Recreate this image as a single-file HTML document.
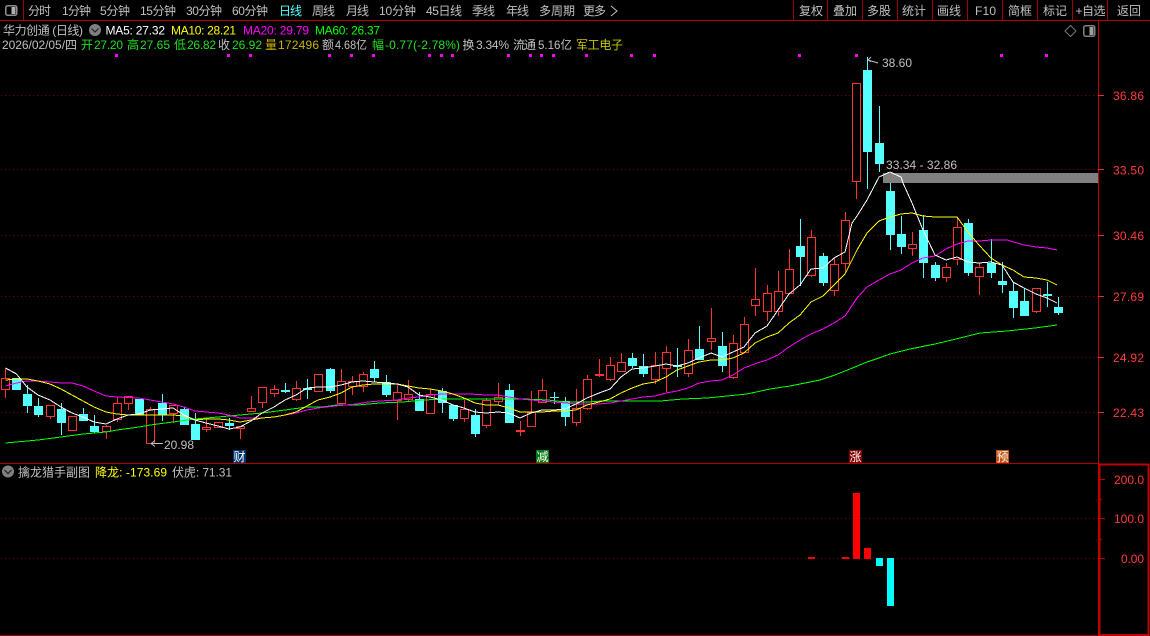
<!DOCTYPE html>
<html lang="zh">
<head>
<meta charset="utf-8">
<title>华力创通 日线</title>
<style>
html,body{margin:0;padding:0;background:#000;width:1150px;height:636px;overflow:hidden}
svg{display:block;position:absolute;left:0;top:0}
text{font-family:"Liberation Sans","Noto Sans CJK SC",sans-serif;font-size:12px;fill:#c0c0c0}
.ax{fill:#ff3c3c}
.g{fill:#20e020}
.y{fill:#ffff00}
.o{fill:#c8b400}
.w{fill:#fff}
.m{fill:#ff00ff}
.gr{fill:#00ff00}
</style>
</head>
<body>
<svg width="1150" height="636" viewBox="0 0 1150 636">
<rect width="1150" height="636" fill="#000"/>

<!-- grid -->
<g stroke="#800000" stroke-width="1" stroke-dasharray="1 3" shape-rendering="crispEdges">
<path d="M1 95.5H1098M1 169.5H1098M1 235.5H1098M1 296.5H1098M1 357.5H1098M1 412.5H1098M1 518.5H1098M1 558.5H1098"/>
</g>

<!-- candles -->
<g shape-rendering="crispEdges">
<path stroke="#55ffff" fill="none" d="M27.5 385V413M38.5 398V417M61.5 403V435M83.5 408V421M94.5 415V433M162.5 394V421M184.5 407V425M195.5 413V440M229.5 418V430M285.5 383V393M307.5 379V399M330.5 368V393M374.5 361V382M386.5 375V397M419.5 392V411M442.5 388V413M453.5 405V421M475.5 409V437M509.5 384V423M554.5 392V404M565.5 397V426M632.5 353V368M643.5 354V377M677.5 348V377M699.5 326V360M722.5 332V372M800.5 219V286M823.5 253V286M867.5 57V189M879.5 106V172M890.5 183V250M901.5 216V254M923.5 215V278M935.5 262V281M968.5 219V276M991.5 239V278M1002.5 262V293M1013.5 282V318M1024.5 288V316M1047.5 282V307M1058.5 297V315"/>
<path fill="#55ffff" d="M12 378h9v12h-9zM23 394h9v12h-9zM34 406h9v9h-9zM57 409h9v14h-9zM79 414h9v7h-9zM90 426h9v6h-9zM135 399h9v16h-9zM158 403h9v12h-9zM180 409h9v16h-9zM191 424h9v16h-9zM225 423h9v3h-9zM281 390h9v2h-9zM303 388h9v2h-9zM326 369h9v22h-9zM370 369h9v9h-9zM382 382h9v13h-9zM415 399h9v12h-9zM438 391h9v12h-9zM449 405h9v14h-9zM471 415h9v19h-9zM505 390h9v33h-9zM550 397h9v1h-9zM561 401h9v16h-9zM628 358h9v8h-9zM639 366h9v8h-9zM673 365h9v2h-9zM695 349h9v11h-9zM718 346h9v20h-9zM796 246h9v11h-9zM819 256h9v27h-9zM863 70h9v82h-9zM875 143h9v21h-9zM886 191h9v44h-9zM897 234h9v13h-9zM919 230h9v33h-9zM931 265h9v13h-9zM964 223h9v50h-9zM987 263h9v10h-9zM998 281h9v4h-9zM1009 291h9v17h-9zM1020 301h9v15h-9zM1043 294h9v2h-9zM1054 307h9v6h-9z"/>
<path stroke="#ff3232" fill="none" d="M5.5 368V398M50.5 405V419M72.5 416V431M106.5 425V439M117.5 397V422M128.5 396V410M150.5 407V443M173.5 405V423M206.5 418V432M218.5 422V428M240.5 426V439M251.5 396V412M262.5 387V408M274.5 385V397M296.5 381V401M318.5 374V391M341.5 369V404M352.5 376V395M363.5 372V392M397.5 383V420M408.5 380V402M430.5 389V413M464.5 400V422M486.5 398V428M498.5 383V405M520.5 421V436M531.5 391V426M542.5 379V402M576.5 389V426M587.5 375V410M599.5 359V377M610.5 357V381M621.5 353V371M655.5 352V384M666.5 346V392M688.5 339V377M711.5 308V350M733.5 335V379M744.5 317V352M755.5 268V316M767.5 285V321M778.5 271V316M789.5 249V294M811.5 230V277M834.5 258V296M845.5 212V273M856.5 83V199M912.5 232V256M946.5 263V282M957.5 217V265M979.5 263V295M1036.5 288V313"/>
<path stroke="#ff3232" fill="#000" d="M1.5 378.5h8v11h-8zM46.5 405.5h8v11h-8zM68.5 416.5h8v14h-8zM102.5 426.5h8v5h-8zM113.5 403.5h8v16h-8zM124.5 396.5h8v7h-8zM146.5 409.5h8v34h-8zM169.5 405.5h8v8h-8zM202.5 427.5h8v2h-8zM214.5 422.5h8v5h-8zM236.5 426.5h8v2h-8zM247.5 408.5h8v3h-8zM258.5 387.5h8v15h-8zM270.5 389.5h8v4h-8zM292.5 388.5h8v11h-8zM314.5 374.5h8v17h-8zM337.5 381.5h8v22h-8zM348.5 381.5h8v5h-8zM359.5 374.5h8v12h-8zM393.5 392.5h8v8h-8zM404.5 394.5h8v5h-8zM426.5 394.5h8v19h-8zM460.5 409.5h8v9h-8zM482.5 400.5h8v25h-8zM494.5 397.5h8v4h-8zM516.5 430.5h8v1h-8zM527.5 412.5h8v14h-8zM538.5 390.5h8v12h-8zM572.5 408.5h8v14h-8zM583.5 379.5h8v29h-8zM595.5 374.5h8v1h-8zM606.5 365.5h8v14h-8zM617.5 362.5h8v9h-8zM651.5 365.5h8v14h-8zM662.5 352.5h8v16h-8zM684.5 350.5h8v23h-8zM707.5 338.5h8v3h-8zM729.5 343.5h8v34h-8zM740.5 324.5h8v28h-8zM751.5 299.5h8v6h-8zM763.5 293.5h8v18h-8zM774.5 291.5h8v20h-8zM785.5 269.5h8v24h-8zM807.5 237.5h8v38h-8zM830.5 264.5h8v26h-8zM841.5 220.5h8v43h-8zM852.5 83.5h8v98h-8zM908.5 244.5h8v4h-8zM942.5 267.5h8v10h-8zM953.5 227.5h8v32h-8zM975.5 267.5h8v9h-8zM1032.5 288.5h8v23h-8z"/>
</g>

<!-- highlight band -->
<rect x="883" y="173" width="215" height="10" fill="#808080"/>

<!-- moving averages -->
<g fill="none" stroke-width="1" shape-rendering="crispEdges" stroke-linejoin="round">
<polyline stroke="#00ff00" points="5.5,443 38,440 61,437 83,434 106,432 117,430 139,427 150,425 173,422 195,419 218,417 240,415 262,413 285,410 307,407 323,407 337,405 358,405 380,403 403,402 423,400 448,399 477,399 503,399 523,399 548,400 565,402 587,402 603,401 637,401 660,401 683,399 707,398 727,396 747,394 770,389 790,386 820,380 835,375 850,369 867,362 879,358 890,354 910,349 935,344 956,339 980,333 1007,331 1035,328 1057,325"/>
<polyline stroke="#ff00ff" points="5.5,386 16.5,383 27,381 38,381 50,382 61,383 72,383 83,386 94,391 106,396 117,397 139,398 150,400 162,402 173,404 184,407 195,411 206,412 218,413 229,415 240,418 251,418 262,418 274,417 285,415 296,413 307,410 318,408 335,406 357,404 368,402 380,401 397,400 408,398 419,397 430,395 442,394 453,394 470,394 486,395 498,395 509,397 520,399 531,400 542,401 554,402 565,403 576,404 587,404 599,404 610,403 621,401 632,399 643,397 655,396 666,393 677,391 688,388 699,383 711,381 722,380 733,375 744,368 757,363 767,360 778,355 789,347 800,340 811,334 823,329 834,323 845,316 857,298 867,287 879,280 890,274 901,270 912,263 923,258 935,256 946,249 957,244 968,241 979,241 991,240 1007,240 1024,245 1036,247 1047,248 1057,250"/>
<polyline stroke="#ffff00" points="5.5,380 16.5,379 27,379 38,381 50,384 61,389 72,395 83,401 94,407 106,412 117,414 128,415 139,415 150,415 162,415 173,415 184,416 195,420 206,419 218,419 229,420 240,422 251,420 262,418 274,417 285,415 296,412 307,406 318,400 330,397 341,393 352,387 363,385 374,384 386,384 397,384 408,386 419,388 430,389 442,391 453,394 464,398 475,403 486,405 498,405 509,408 520,412 531,412 542,412 554,411 565,411 576,410 587,405 599,402 610,399 621,393 632,388 643,384 655,382 666,377 677,370 688,366 699,362 711,360 722,360 733,358 744,353 755,343 767,337 778,333 789,323 800,315 811,302 823,296 834,285 845,274 857,250 867,233 879,221 890,217 901,214 912,213 923,216 935,217 957,217 968,232 979,245 991,258 1002,265 1013,270 1024,277 1036,278 1047,280 1057,285"/>
<polyline stroke="#ffffff" points="5.5,368 16.5,374 27,387 38,395 50,400 61,407 72,413 83,417 94,422 106,424 117,419 128,415 139,414 150,410 162,409 173,408 184,415 195,420 206,423 218,426 229,429 240,427 251,421 262,413 274,407 285,400 296,395 307,388 318,387 330,387 341,385 352,382 363,381 374,382 386,383 397,384 408,387 419,395 430,397 442,400 453,405 464,408 475,412 486,413 498,412 509,413 520,418 531,413 542,410 554,410 565,409 576,404 587,398 599,393 610,389 621,377 632,369 643,368 655,366 666,364 677,366 688,363 699,358 711,353 722,357 733,352 744,347 755,333 767,326 778,310 789,294 800,285 811,269 823,268 834,258 845,252 852,223 857,216 867,200 879,177 890,172 901,177 903,183 912,203 923,230 935,255 946,260 957,257 968,262 979,263 991,262 1002,265 1013,282 1024,288 1036,294 1047,298 1057,303"/>
</g>

<!-- panel frame -->
<g fill="none" stroke="#b00000" shape-rendering="crispEdges">
<path d="M0 20.5H1150" stroke="#b80000"/>
<path d="M23.5 0V20M793.5 0V20M827.5 0V20M862.5 0V20M897.5 0V20M932.5 0V20M967.5 0V20M1002.5 0V20M1037.5 0V20M1072.5 0V20M1107.5 0V20" stroke="#a00000"/>
<path d="M1098.5 20V636" stroke="#c00000"/>
<path d="M0 463.5H1098" stroke="#b00000"/>
<path d="M0 635.5H1098" stroke="#900000"/>
<rect x="1099.5" y="464.5" width="49" height="170.5" stroke="#c00000" stroke-width="2"/>
</g>
<g stroke="#e03030" shape-rendering="crispEdges" fill="none">
<path d="M1098 95.5h6M1098 169.5h6M1098 235.5h6M1098 296.5h6M1098 357.5h6M1098 412.5h6"/>
<path d="M1100 479.5h5M1100 518.5h5M1100 558.5h5M1100 499.5h2M1100 539.5h2" stroke="#c00000"/>
</g>

<!-- top-left icon -->
<rect x="5.75" y="5.75" width="11" height="9.5" rx="2" fill="none" stroke="#909090" stroke-width="1.5"/>
<rect x="11.5" y="7" width="4" height="7" fill="#b0b0b0"/>

<!-- menu -->
<g>
<text x="28" y="15" textLength="23">分时</text>
<text x="62" y="15" textLength="29">1分钟</text>
<text x="100" y="15" textLength="30">5分钟</text>
<text x="140" y="15" textLength="36">15分钟</text>
<text x="186" y="15" textLength="36">30分钟</text>
<text x="232" y="15" textLength="36">60分钟</text>
<text x="279" y="15" textLength="23" style="fill:#55ffff">日线</text>
<text x="312" y="15" textLength="23">周线</text>
<text x="346" y="15" textLength="23">月线</text>
<text x="379" y="15" textLength="37">10分钟</text>
<text x="426" y="15" textLength="36">45日线</text>
<text x="472" y="15" textLength="23">季线</text>
<text x="506" y="15" textLength="23">年线</text>
<text x="539" y="15" textLength="36">多周期</text>
<text x="583" y="15" textLength="23">更多</text>
<path d="M611 6l6 5-6 5" fill="none" stroke="#c0c0c0"/>
<text x="799" y="15" textLength="24">复权</text>
<text x="833" y="15" textLength="24">叠加</text>
<text x="867" y="15" textLength="24">多股</text>
<text x="902" y="15" textLength="24">统计</text>
<text x="937" y="15" textLength="24">画线</text>
<text x="975" y="15" textLength="21">F10</text>
<text x="1008" y="15" textLength="24">简框</text>
<text x="1043" y="15" textLength="24">标记</text>
<text x="1075.5" y="15" textLength="30">+自选</text>
<text x="1117" y="15" textLength="24">返回</text>
</g>

<!-- title row -->
<text x="3" y="34.5" textLength="80">华力创通 (日线)</text>
<circle cx="95" cy="30" r="6" fill="#808080"/>
<path d="M91.5 28.5l3.5 3.5 3.5-3.5" fill="none" stroke="#222" stroke-width="1.2"/>
<text x="105.5" y="34.5" textLength="59.5" class="w">MA5: 27.32</text>
<text x="171" y="34.5" textLength="65" class="y">MA10: 28.21</text>
<text x="243" y="34.5" textLength="66" class="m">MA20: 29.79</text>
<text x="315" y="34.5" textLength="65" class="gr">MA60: 26.37</text>

<!-- quote row -->
<text x="2" y="49" textLength="75">2026/02/05/四</text>
<text x="81" y="49" class="g">开</text><text x="94" y="49" textLength="29" class="g">27.20</text>
<text x="127" y="49" class="g">高</text><text x="140" y="49" textLength="30" class="g">27.65</text>
<text x="174" y="49" class="g">低</text><text x="187" y="49" textLength="29" class="g">26.82</text>
<text x="218" y="49">收</text><text x="232" y="49" textLength="30" class="g">26.92</text>
<text x="265" y="49" class="o">量</text><text x="278" y="49" textLength="41" class="o">172496</text>
<text x="322" y="49">额</text><text x="335" y="49" textLength="32" lengthAdjust="spacingAndGlyphs">4.68亿</text>
<text x="372" y="49" class="g">幅</text><text x="385" y="49" textLength="75" class="g">-0.77(-2.78%)</text>
<text x="462.5" y="49">换</text><text x="476" y="49" textLength="33">3.34%</text>
<text x="513" y="49" textLength="23">流通</text><text x="538" y="49" textLength="34" lengthAdjust="spacingAndGlyphs">5.16亿</text>
<text x="576" y="49" textLength="47" style="fill:#c8c800">军工电子</text>

<!-- diamond + icon -->
<path d="M1070.5 25.5l5.5 5.5-5.5 5.5-5.5-5.5z" fill="none" stroke="#777"/>
<rect x="1083.75" y="25.75" width="11" height="10.5" rx="2" fill="none" stroke="#808080" stroke-width="1.5"/>
<rect x="1089.5" y="27" width="4" height="8" fill="#a0a0a0"/>

<!-- magenta markers -->
<path fill="#ff00ff" d="M115 54h3v3h-3zM227 54h3v3h-3zM249 54h3v3h-3zM328 54h3v3h-3zM350 54h3v3h-3zM372 54h3v3h-3zM428 54h3v3h-3zM440 54h3v3h-3zM451 54h3v3h-3zM507 54h3v3h-3zM529 54h3v3h-3zM540 54h3v3h-3zM552 54h3v3h-3zM585 54h3v3h-3zM630 54h3v3h-3zM653 54h3v3h-3zM798 54h3v3h-3zM855 54h3v3h-3zM1000 54h3v3h-3zM1045 54h3v3h-3z"/>

<!-- high/low annotations -->
<path d="M868 60l10 3M868 60l3-3M868 60l3 1.5" fill="none" stroke="#c0c0c0"/>
<text x="882" y="67" textLength="30">38.60</text>
<text x="886" y="169" textLength="71">33.34 - 32.86</text>
<path d="M151 443.5h12M151 443.5l4-3M151 443.5l4 3" fill="none" stroke="#c0c0c0"/>
<text x="164" y="449" textLength="30">20.98</text>

<!-- axis labels -->
<text x="1113" y="100" textLength="31" class="ax">36.86</text>
<text x="1113" y="174.5" textLength="31" class="ax">33.50</text>
<text x="1113" y="240" textLength="31" class="ax">30.46</text>
<text x="1113" y="301" textLength="31" class="ax">27.69</text>
<text x="1113" y="362" textLength="31" class="ax">24.92</text>
<text x="1113" y="417" textLength="31" class="ax">22.43</text>
<text x="1114" y="484" textLength="30" class="ax">200.0</text>
<text x="1114" y="523" textLength="30" class="ax">100.0</text>
<text x="1121" y="563" textLength="23" class="ax">0.00</text>

<!-- news badges -->
<rect x="233" y="450" width="13" height="13" fill="#003470"/>
<text x="233.5" y="461" style="fill:#fff">财</text>
<rect x="536" y="450" width="13" height="13" fill="#007a10"/>
<text x="536.5" y="461" style="fill:#fff">减</text>
<rect x="849" y="450" width="13" height="13" fill="#800000"/>
<text x="849.5" y="461" style="fill:#fff">涨</text>
<rect x="996" y="450" width="13" height="13" fill="#c05010"/>
<text x="996.5" y="461" style="fill:#fff">预</text>

<!-- sub panel title -->
<circle cx="8" cy="471.5" r="6" fill="#808080"/>
<path d="M4.5 470l3.5 3.5 3.5-3.5" fill="none" stroke="#222" stroke-width="1.2"/>
<text x="18" y="476.5" textLength="72">擒龙猎手副图</text>
<text x="95" y="476.5" textLength="72" class="y">降龙: -173.69</text>
<text x="172" y="476.5" textLength="60">伏虎: 71.31</text>

<!-- sub panel bars -->
<g shape-rendering="crispEdges">
<path fill="#ff0000" d="M808 557h7v2h-7zM842 557h7v2h-7zM853 493h7v66h-7zM864 548h7v11h-7z"/>
<path fill="#00ffff" d="M876 558h7v8h-7zM887 558h7v48h-7z"/>
</g>
</svg>
</body>
</html>
